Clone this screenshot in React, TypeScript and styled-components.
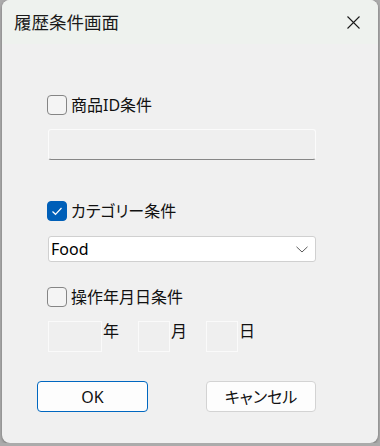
import React from "react";
import styled, { createGlobalStyle } from "styled-components";

const Global = createGlobalStyle`
  html, body { margin: 0; padding: 0; background: #ababab; }
  body { font-family: "Noto Sans", "Noto Sans CJK JP", sans-serif; }
`;

const Window = styled.div`
  margin-left: 2px;
  width: 376px;
  height: 443px;
  box-sizing: border-box;
  border-radius: 8px;
  background: #f0f0f0;
  overflow: hidden;
  display: flex;
  flex-direction: column;
  box-shadow: 0 1px 3px rgba(0, 0, 0, 0.35);
  color: #1a1a1a;
`;

const TitleBar = styled.div`
  height: 44px;
  flex: none;
  background: #eef2ee;
  display: flex;
  align-items: center;
  justify-content: space-between;
  padding-left: 12px;
`;

const Title = styled.span`
  font-family: "Noto Sans CJK JP", sans-serif;
  font-size: 17.5px;
  line-height: 20px;
  color: #1a1a1a;
`;

const CloseButton = styled.div`
  width: 46px;
  height: 44px;
  margin-right: 2px;
  display: flex;
  align-items: center;
  justify-content: center;
`;

const Form = styled.div`
  display: flex;
  flex-direction: column;
  align-items: flex-start;
  padding-left: 45px;
`;

const CheckRow = styled.label<{ $top: number }>`
  margin-top: ${(p) => p.$top}px;
  height: 20px;
  display: flex;
  align-items: center;
  gap: 4px;
`;

const Box = styled.span<{ $checked?: boolean }>`
  width: 20px;
  height: 20px;
  box-sizing: border-box;
  border-radius: 4px;
  border: 1px solid ${(p) => (p.$checked ? "#005fb8" : "#858585")};
  background: ${(p) => (p.$checked ? "#005fb8" : "#f4f4f4")};
  display: flex;
  align-items: center;
  justify-content: center;
`;

const Label = styled.span`
  font-family: "Noto Sans", "Noto Sans CJK JP", sans-serif;
  font-feature-settings: "palt";
  font-size: 16px;
  line-height: 20px;
  color: #111;
`;

const TextBox = styled.div`
  margin-top: 14px;
  margin-left: 1px;
  width: 268px;
  height: 31px;
  box-sizing: border-box;
  border: 1px solid #fbfbfb;
  border-bottom: 1px solid #868686;
  border-radius: 3px;
  background: #efefef;
`;

const Select = styled.div`
  margin-top: 15px;
  margin-left: 1px;
  width: 268px;
  height: 26px;
  box-sizing: border-box;
  border: 1px solid #d0d0d0;
  border-radius: 3px;
  background: #ffffff;
  display: flex;
  align-items: center;
  justify-content: space-between;
  padding: 0 7px 0 2px;
`;

const SelectText = styled.span`
  font-family: "Noto Sans", sans-serif;
  font-size: 16px;
  line-height: 20px;
  color: #000;
`;

const DateRow = styled.div`
  margin-top: 14px;
  margin-left: 1px;
  display: flex;
  align-items: flex-start;
`;

const DateBox = styled.div<{ $w: number; $gap: number }>`
  width: ${(p) => p.$w}px;
  height: 31px;
  box-sizing: border-box;
  margin-left: ${(p) => p.$gap}px;
  border: 1px solid #fafafa;
  background: #efefef;
`;

const DateUnit = styled.span`
  font-family: "Noto Sans CJK JP", sans-serif;
  font-size: 16px;
  line-height: 18px;
  margin-left: 1px;
  color: #111;
`;

const ButtonBar = styled.div`
  margin-top: 29px;
  padding-left: 35px;
  display: flex;
  gap: 58px;
`;

const Button = styled.div<{ $primary?: boolean; $w: number }>`
  width: ${(p) => p.$w}px;
  height: 31px;
  box-sizing: border-box;
  border-radius: 4px;
  border: 1px solid ${(p) => (p.$primary ? "#0067c0" : "#d3d3d3")};
  background: #fdfdfd;
  display: flex;
  align-items: center;
  justify-content: center;
  font-family: "Noto Sans", "Noto Sans CJK JP", sans-serif;
  font-feature-settings: "palt";
  font-size: 16px;
  line-height: 20px;
  color: #111;
`;

const Check = () => (
  <svg width="14" height="14" viewBox="0 0 14 14">
    <polyline points="2.5,7.5 5.5,10.3 11.5,4" fill="none" stroke="#fff" strokeWidth="1.2" />
  </svg>
);

export default function App() {
  return (
    <>
      <Global />
      <Window>
        <TitleBar>
          <Title>履歴条件画面</Title>
          <CloseButton>
            <svg width="13" height="13" viewBox="0 0 13 13">
              <path d="M0.5 0.5 L12.5 12.5 M12.5 0.5 L0.5 12.5" stroke="#1b1b1b" strokeWidth="1.1" />
            </svg>
          </CloseButton>
        </TitleBar>
        <Form>
          <CheckRow $top={51}>
            <Box />
            <Label>商品ID条件</Label>
          </CheckRow>
          <TextBox />
          <CheckRow $top={41}>
            <Box $checked>
              <Check />
            </Box>
            <Label>カテゴリー条件</Label>
          </CheckRow>
          <Select>
            <SelectText>Food</SelectText>
            <svg width="12" height="7" viewBox="0 0 12 7">
              <polyline points="0.5,0.8 6,6 11.5,0.8" fill="none" stroke="#5a5a5a" strokeWidth="1" />
            </svg>
          </Select>
          <CheckRow $top={25}>
            <Box />
            <Label>操作年月日条件</Label>
          </CheckRow>
          <DateRow>
            <DateBox $w={54} $gap={0} />
            <DateUnit>年</DateUnit>
            <DateBox $w={32} $gap={19} />
            <DateUnit>月</DateUnit>
            <DateBox $w={32} $gap={19} />
            <DateUnit>日</DateUnit>
          </DateRow>
        </Form>
        <ButtonBar>
          <Button $primary $w={111}>OK</Button>
          <Button $w={110}>キャンセル</Button>
        </ButtonBar>
      </Window>
    </>
  );
}
